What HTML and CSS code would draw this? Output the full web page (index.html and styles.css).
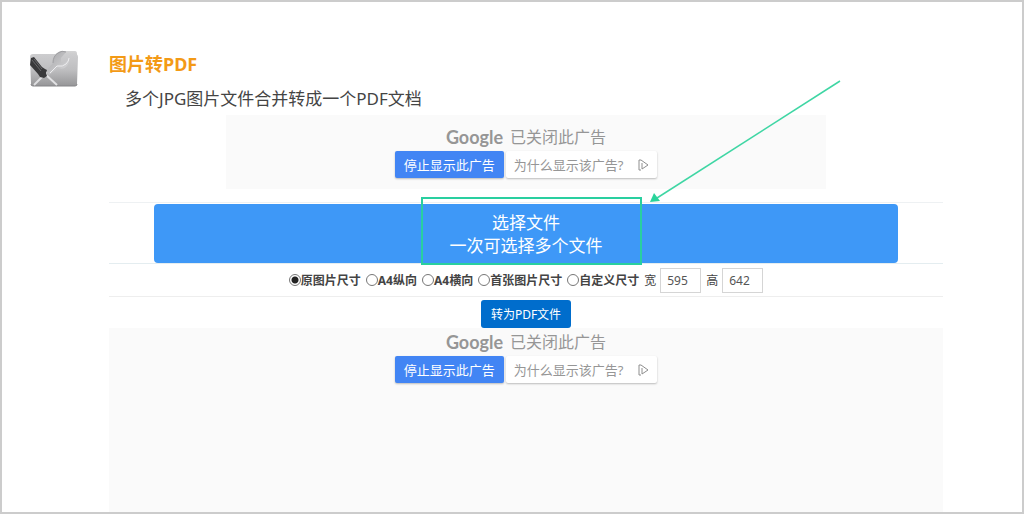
FILE: index.html
```
<!DOCTYPE html>
<html lang="zh-CN">
<head>
<meta charset="utf-8">
<title>图片转PDF</title>
<link rel="stylesheet" href="styles.css">
</head>
<body>
<div class="page">
  <svg class="folder" viewBox="0 0 48 38" aria-hidden="true">
    <defs>
      <linearGradient id="front" x1="0" y1="0" x2="0" y2="1">
        <stop offset="0" stop-color="#cdcdcf"/>
        <stop offset="0.5" stop-color="#bebec0"/>
        <stop offset="1" stop-color="#969698"/>
      </linearGradient>
      <linearGradient id="back" x1="0" y1="0" x2="0" y2="1">
        <stop offset="0" stop-color="#d4d4d5"/>
        <stop offset="1" stop-color="#b4b4b6"/>
      </linearGradient>
      <linearGradient id="steel" x1="0" y1="0" x2="1" y2="1">
        <stop offset="0" stop-color="#a2a2a5"/>
        <stop offset="1" stop-color="#dcdcde"/>
      </linearGradient>
    </defs>
    <path d="M24 5l6-4h15q2 0 2 3v10H24z" fill="url(#back)"/>
    <path d="M3 4h42q3 0 3 3l-1 27q0 2-2 2H3q-2 0-2-2L0 7q0-3 3-3z" fill="url(#front)"/>
    <path d="M1 34q0 2 2 2h42q2 0 2-2" fill="none" stroke="#858588"/>
    <path d="M4 35L22 17" stroke="#dedee0" stroke-width="2"/>
    <path d="M16 21L23 13q0-7 5-10 4-3 8-1l-5 6 0 4 4 0 4-4q1 5-3 9-3 3-8 1L19 25z" fill="url(#steel)"/>
    <path d="M20 23l7-7q6 1 9-2 3-3 3-6" fill="none" stroke="#ededef"/>
    <path d="M23 13q0-7 5-10 4-3 8-1" fill="none" stroke="#9e9ea1"/>
    <path d="M15 24l12 11" stroke="#e2e2e4" stroke-width="2"/>
    <path d="M1 8l3-1 8 10 3 2 2 1-1 3 1 3-3 2-4-1-2-3-8-9z" fill="#39393b"/>
    <path d="M2 10l9 11M4 9l8 10" stroke="#68686b"/>
  </svg>
  <main class="content">
    <h1 class="title">图片转PDF</h1>
    <p class="subtitle">多个JPG图片文件合并转成一个PDF文档</p>
    <section class="ad ad-small">
      <p class="ad-head"><span class="ad-brand">Google</span>已关闭此广告</p>
      <div class="ad-actions">
        <button class="ad-stop" type="button">停止显示此广告</button>
        <button class="ad-why" type="button">为什么显示该广告?<svg class="ad-mark" viewBox="0 0 12 12" aria-hidden="true"><path d="M4 11H2V1h2l7 5-6 4V4" fill="none" stroke="#8e8e8e" stroke-linejoin="round"/></svg></button>
      </div>
    </section>
    <form class="tool">
      <div class="picker">
        <button class="pick" type="button">选择文件<br>一次可选择多个文件</button>
        <div class="highlight"></div>
        <svg class="arrow" viewBox="0 0 192 124" aria-hidden="true">
          <path d="M190 1L7 118" stroke="#3fd6a4" stroke-width="1.5"/>
          <path d="M0 122l4-9 6 8z" fill="#2ad49b"/>
        </svg>
      </div>
      <div class="options">
        <label class="choice"><input type="radio" name="size" checked>原图片尺寸</label>
        <label class="choice"><input type="radio" name="size">A4纵向</label>
        <label class="choice"><input type="radio" name="size">A4横向</label>
        <label class="choice"><input type="radio" name="size">首张图片尺寸</label>
        <label class="choice"><input type="radio" name="size">自定义尺寸</label>
        <label class="dimension">宽<input type="text" value="595"></label>
        <label class="dimension">高<input type="text" value="642"></label>
      </div>
      <button class="convert" type="submit">转为PDF文件</button>
    </form>
    <section class="ad ad-large">
      <p class="ad-head"><span class="ad-brand">Google</span>已关闭此广告</p>
      <div class="ad-actions">
        <button class="ad-stop" type="button">停止显示此广告</button>
        <button class="ad-why" type="button">为什么显示该广告?<svg class="ad-mark" viewBox="0 0 12 12" aria-hidden="true"><path d="M4 11H2V1h2l7 5-6 4V4" fill="none" stroke="#8e8e8e" stroke-linejoin="round"/></svg></button>
      </div>
    </section>
  </main>
</div>
</body>
</html>
```
FILE: styles.css
```
* {
  box-sizing: border-box;
}

body {
  margin: 0;
  background: #fff;
  color: #444;
  font-family: "Noto Sans", "Noto Sans CJK SC", sans-serif;
  font-size: 12px;
}

button,
input {
  margin: 0;
  font: inherit;
}

.page {
  display: flex;
  align-items: flex-start;
  gap: 31px;
  min-height: 100vh;
  padding: 48px 79px 0 28px;
  border: 2px solid #ccc;
}

.folder {
  flex: none;
  width: 48px;
  height: 38px;
}

.content {
  display: flex;
  flex: 1;
  flex-direction: column;
  align-self: stretch;
  min-width: 0;
}

.title {
  margin: 0;
  color: #f39a16;
  font-size: 18px;
  line-height: 28px;
}

.subtitle {
  margin: 8px 0 4px;
  padding-left: 16px;
  font-size: 17px;
  line-height: 25px;
}

.ad {
  background: #fafafa;
  color: #969696;
}

.ad-small {
  width: 72%;
  height: 74px;
  margin: 0 auto 13px;
  padding-top: 9px;
}

.ad-large {
  flex: 1;
  padding-top: 1px;
}

.ad-head {
  display: flex;
  align-items: center;
  justify-content: center;
  gap: 7px;
  margin: 0;
  font-size: 16px;
  line-height: 27px;
}

.ad-brand {
  font-family: Lato, sans-serif;
  font-size: 18px;
  font-weight: 700;
}

.ad-actions {
  display: flex;
  justify-content: center;
  gap: 2px;
}

.ad-stop,
.ad-why {
  height: 27px;
  padding: 0 8px;
  border: 0;
  border-radius: 2px;
  box-shadow: 0 1px 2px #bbb;
  font-size: 13px;
  line-height: 20px;
}

.ad-stop {
  padding: 0 9px;
  background: #4285f4;
  color: #fff;
}

.ad-why {
  display: flex;
  align-items: center;
  gap: 14px;
  background: #fff;
  color: #969696;
}

.ad-mark {
  width: 12px;
  height: 12px;
}

.tool {
  display: flex;
  flex-direction: column;
  align-items: center;
}

.picker {
  position: relative;
  align-self: stretch;
  padding: 1px 45px 0;
  border-top: 1px solid #eef1f3;
  border-bottom: 1px solid #e4edf0;
}

.pick {
  display: block;
  width: 100%;
  padding: 7px 0 6px;
  border: 0;
  border-radius: 4px;
  background: #3e98f7;
  color: #fff;
  font-size: 17px;
  line-height: 23px;
}

.highlight {
  position: absolute;
  top: -6px;
  left: calc(50% - 105px);
  width: 221px;
  height: 68px;
  border: 2px solid #29cfa0;
}

.arrow {
  position: absolute;
  top: -123px;
  left: calc(50% + 124px);
  width: 192px;
  height: 124px;
}

.options {
  display: flex;
  align-items: center;
  align-self: stretch;
  justify-content: center;
  gap: 5px;
  height: 33px;
  border-bottom: 1px solid #eee;
}

.choice,
.dimension {
  display: flex;
  align-items: center;
  white-space: nowrap;
}

.choice {
  font-weight: 700;
}

.choice input {
  appearance: none;
  width: 12px;
  height: 12px;
  border: 1px solid #777;
  border-radius: 50%;
  background: #fff;
}

.choice input:checked {
  background: radial-gradient(circle, #222 3px, #fff 4px);
}

.dimension {
  gap: 4px;
}

.dimension input {
  width: 41px;
  height: 25px;
  padding: 0 6px;
  border: 1px solid #d5d5d5;
  border-radius: 0;
  background: #fff;
  color: #555;
}

.convert {
  height: 28px;
  margin: 3px 0 0;
  padding: 0 10px;
  border: 0;
  border-radius: 3px;
  background: #006dcc;
  color: #fff;
}
```
